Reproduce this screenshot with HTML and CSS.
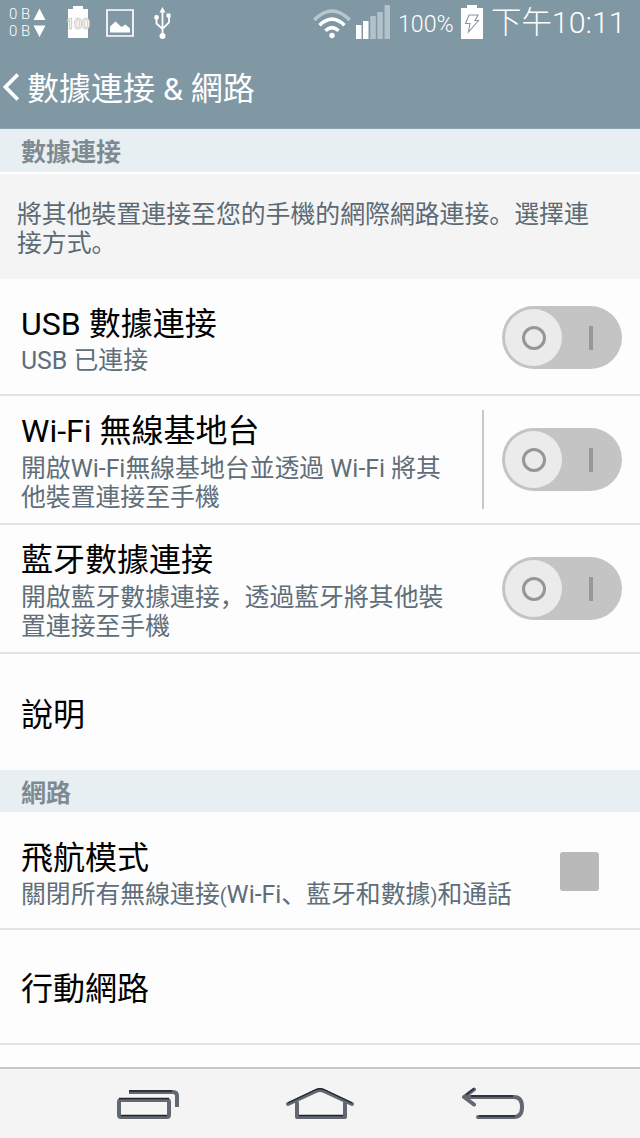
FILE: index.html
```html
<!DOCTYPE html>
<html lang="zh-Hans">
<head>
<meta charset="utf-8">
<title>數據連接 &amp; 網路</title>
<link rel="stylesheet" href="styles.css">
</head>
<body>
<div class="screen">
  <div class="top">
    <div class="status">
      <div class="traffic"><span>0 B</span><span>0 B</span></div>
      <svg class="arrows" width="13" height="30" viewBox="0 0 13 30" fill="#fff"><path d="M6.500 0.500L12.500 12H0.500zM0.500 17.500H12.500L6.500 29z"/></svg>
      <div class="batt">
        <svg width="22" height="32" viewBox="0 0 22 32" fill="#fff"><path d="M6 0h10v3h5v29H1V3h5z"/></svg>
        <span>100</span>
      </div>
      <svg class="picture" width="28" height="28" viewBox="0 0 28 28"><path d="M1 1h26v26H1z" fill="none" stroke="#fff" stroke-width="1.700"/><path d="M4 23.500v-6l5.500-5 6 5.500 4-2.500 4.500 4v4z" fill="#fff"/></svg>
      <svg class="usb" width="20" height="33" viewBox="0 0 20 33" fill="none" stroke="#fff" stroke-width="1.800"><path d="M9.500 5v22M3.500 11v5.500l6 5.500 6.500-6.500V9"/><path d="M9.500 0l3 5.500h-6zM13.500 6.500h4v4h-4z" fill="#fff" stroke="none"/><circle cx="3.500" cy="10.500" r="2.400" fill="#fff" stroke="none"/><circle cx="9.500" cy="29" r="3" fill="#fff" stroke="none"/></svg>
      <svg class="wifi" width="38" height="30" viewBox="0 0 38 30" fill="none" stroke="#fff" stroke-width="3.400"><path d="M1.300 11Q19-7 36.700 11" stroke="#b9c6ce" stroke-width="3.700"/><path d="M6.500 16.200Q19 4 31.500 16.200M12.300 21.700Q19 15.500 25.700 21.700"/><circle cx="19" cy="26.500" r="2.700" fill="#fff" stroke="none"/></svg>
      <svg class="signal" width="34" height="34" viewBox="0 0 34 34" fill="#b3c1ca"><path d="M0 20h5.500v14H0zM7 16h5.500v18H7z" fill="#fff"/><path d="M14.300 11h5.500v23h-5.500zM21.300 7h5.500v27h-5.500zM28.500 0H34v34h-5.500z"/></svg>
      <span class="percent">100%</span>
      <svg class="charge" width="22" height="34" viewBox="0 0 22 34"><path d="M6 0h10v3h6v31H0V3h6z" fill="#fff"/><path d="M8 10h9l-3 5.500h3.500L7.500 27l1.500-8.500H4.500z" fill="none" stroke="#8097a4" stroke-width="1.100"/></svg>
      <span class="clock">下午10:11</span>
    </div>
    <div class="appbar">
      <svg width="17" height="28" viewBox="0 0 17 28"><path d="M14.800 1.500L2.500 14l12.300 12.500" fill="none" stroke="#fff" stroke-width="3.800"/></svg>
      <h1>數據連接 &amp; 網路</h1>
    </div>
  </div>
  <h2 class="section first">數據連接</h2>
  <p class="intro">將其他裝置連接至您的手機的網際網路連接。選擇連<br>接方式。</p>

  <div class="row short">
    <div class="copy"><h3>USB 數據連接</h3><p>USB 已連接</p></div>
    <div class="switch"><i></i><b></b></div>
  </div>
  <div class="row tall">
    <div class="copy"><h3>Wi-Fi 無線基地台</h3><p>開啟Wi-Fi無線基地台並透過 Wi-Fi 將其<br>他裝置連接至手機</p></div>
    <div class="divider"></div>
    <div class="switch"><i></i><b></b></div>
  </div>
  <div class="row tall">
    <div class="copy"><h3>藍牙數據連接</h3><p>開啟藍牙數據連接，透過藍牙將其他裝<br>置連接至手機</p></div>
    <div class="switch"><i></i><b></b></div>
  </div>
  <div class="row single plain"><div class="copy"><h3>說明</h3></div></div>

  <h2 class="section">網路</h2>
  <div class="row short airplane">
    <div class="copy"><h3>飛航模式</h3><p>關閉所有無線連接<small>(</small>Wi-Fi、藍牙和數據<small>)</small>和通話</p></div>
    <div class="check"></div>
  </div>
  <div class="row single last"><div class="copy"><h3>行動網路</h3></div></div>
  <div class="rest"></div>

  <div class="nav">
    <svg width="640" height="69" viewBox="0 0 640 69" fill="none" stroke="#626872" stroke-width="4" stroke-linejoin="round">
      <rect x="119" y="31" width="50" height="17" rx="2"/><path d="M129 23h44q4 0 4 4v11"/>
      <path d="M288 35l28-13q4-2 8 0l28 13M297 34v14h48V34" stroke-linecap="round"/>
      <path d="M464 28h50q8 0 8 10t-8 10h-36M474 20.500l-10 7.500 10 7.500" stroke-linecap="round"/>
      <path d="M119 29.500h50M129 22h43M121 46.500h46M288 34l28-13.500q4-1.500 8 0L352 34M299 46.500h44M471 27h42M466 26l8-6.500M479 47h36" stroke="#20242b" stroke-width="1.300"/>
    </svg>
  </div>
</div>
</body>
</html>
```
FILE: styles.css
```css
* { box-sizing: border-box; }
body { margin: 0; font-family: Roboto, "Noto Sans CJK SC", sans-serif; background: #fdfdfd; }
h1, h2, h3, p { margin: 0; font-weight: 400; white-space: nowrap; }
svg { display: block; flex: none; }
.screen { width: 640px; height: 1138px; display: flex; flex-direction: column; overflow: hidden; }
.top { height: 129px; flex: none; background: #8097a4; border-bottom: 1px solid #90a4af; color: #fff; }

.status { height: 45px; display: flex; align-items: flex-start; padding-left: 9px; white-space: nowrap; }
.traffic { width: 21px; margin-top: 6px; font-size: 15px; line-height: 17px; font-weight: 300; }
.traffic span { display: block; }
.arrows { margin: 8px 0 0 3px; }
.batt { position: relative; margin: 6px 0 0 21px; }
.batt span { position: absolute; left: -1px; top: 9px; width: 24px; text-align: center; font-size: 14px; line-height: 18px; font-weight: 700; color: #fff; -webkit-text-stroke: 0.6px #a3b3bd; }
.picture { margin: 9px 0 0 17px; }
.usb { margin: 7px 0 0 19px; }
.wifi { margin: 9px 0 0 140px; }
.signal { margin: 5px 0 0 5px; }
.percent { width: 63px; margin-left: 8px; line-height: 48px; font-size: 23.200px; font-weight: 300; }
.charge { margin-top: 5px; }
.clock { margin-left: 8px; line-height: 45px; font-size: 30.400px; font-weight: 300; }

.appbar { height: 84px; display: flex; align-items: center; padding-left: 3px; }
.appbar h1 { margin-left: 7px; padding-top: 3px; font-size: 32px; line-height: 44px; }

.section { height: 42px; flex: none; padding-left: 21px; background: #e8eff3; color: #7f8a90; font-size: 25px; line-height: 47px; font-weight: 700; }
.section.first { height: 45px; border-bottom: 2px solid #fff; }
.intro { height: 105px; flex: none; padding: 26px 0 0 17px; background: #f4f4f4; color: #5c6a74; font-size: 24.870px; line-height: 29px; }

.row { flex: none; display: flex; align-items: center; border-bottom: 2px solid #e1e3e4; padding: 0 18px 0 21px; }
.row.short { height: 117px; }
.row.tall { height: 129px; }
.row.single { height: 116px; }
.row.plain { border-bottom: 0; }
.row.airplane { height: 118px; }
.row.last { height: 115px; }
.copy { flex: 1; min-width: 0; padding-top: 5px; }
.row.tall .copy { padding-top: 4px; }
.row.single .copy { padding-top: 5px; }
.row.airplane .copy { padding-top: 9px; }
.copy h3 { color: #000; font-size: 32px; line-height: 40px; }
.copy p { margin-top: 2px; color: #5f6e79; font-size: 24.850px; line-height: 29px; }
.row.tall .copy p { margin-top: 3px; }
.copy small { font-size: 20px; }
.divider { width: 2px; height: 99px; margin-right: 18px; background: #c5c8cd; }
.switch { width: 120px; height: 63px; flex: none; border-radius: 32px; background: #c4c4c4; padding: 3px; display: flex; align-items: center; }
.short .switch { margin-top: 2px; }
.switch i { width: 57px; height: 57px; border-radius: 50%; background: #ebebeb; display: grid; place-items: center; }
.switch i::before { content: ""; box-sizing: border-box; width: 24px; height: 24px; border: 3px solid #969696; border-radius: 50%; }
.switch b { width: 4px; height: 24px; margin-left: 27px; background: #989898; }
.check { width: 39px; height: 39px; margin: 2px 23px 0 0; border-radius: 3px; background: #b9b9b9; }
.rest { flex: 1; background: #fdfdfd; }
.nav { height: 71px; flex: none; border-top: 2px solid #c3c8ca; background: #f4f4f4; }
```
